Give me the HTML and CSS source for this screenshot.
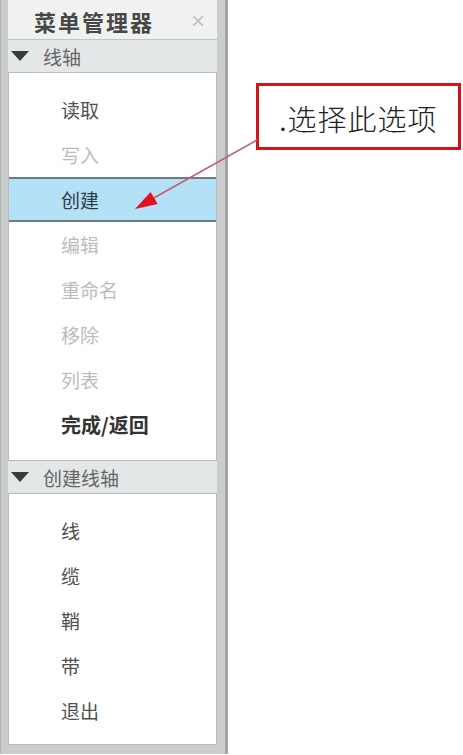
FILE: index.html
```html
<!DOCTYPE html>
<html lang="zh-CN">
<head>
    <meta charset="UTF-8">
    <meta name="viewport" content="width=device-width, initial-scale=1.0">
    <title>菜单管理器</title>
    <link rel="stylesheet" href="styles.css">
</head>
<body>
    <div class="panel">
        <div class="title-bar">
            <span class="title">菜单管理器</span>
            <span class="close">&times;</span>
        </div>

        <div class="section-head">
            <svg class="caret" width="18" height="10" viewBox="0 0 18 10"><polygon points="0,0 18,0 9,10" fill="#3a3a3a"/></svg>
            <span>线轴</span>
        </div>
        <ul class="menu-box">
            <li>读取</li>
            <li class="disabled">写入</li>
            <li class="selected">创建</li>
            <li class="disabled">编辑</li>
            <li class="disabled">重命名</li>
            <li class="disabled">移除</li>
            <li class="disabled">列表</li>
            <li class="done">完成/返回</li>
        </ul>

        <div class="section-head">
            <svg class="caret" width="18" height="10" viewBox="0 0 18 10"><polygon points="0,0 18,0 9,10" fill="#3a3a3a"/></svg>
            <span>创建线轴</span>
        </div>
        <ul class="menu-box menu-box-small">
            <li>线</li>
            <li>缆</li>
            <li>鞘</li>
            <li>带</li>
            <li>退出</li>
        </ul>
    </div>

    <!-- annotation -->
    <div class="callout">.选择此选项</div>
    <svg class="pointer" width="463" height="755" viewBox="0 0 463 755">
        <line x1="257" y1="140" x2="152" y2="199" stroke="#c95a6e" stroke-width="1.6"/>
        <polygon points="135,209 157.6,204.1 150.6,192" fill="#e2121c"/>
    </svg>
</body>
</html>
```

FILE: styles.css
```css
body {
    margin: 0;
    background-color: #fff;
    font-family: "Noto Sans CJK SC", "Liberation Sans", sans-serif;
}
.panel {
    width: 228px;
    box-sizing: border-box;
    background-color: #cbcdcd;
    padding: 0 8px 9px 7px;
    border-left: 1px solid #b5b5b5;
    border-right: 3px solid #a3a5a5;
}
.title-bar {
    height: 40px;
    display: flex;
    align-items: center;
    background-color: #f0f2f2;
    border-bottom: 1px solid #c2c4c4;
    box-sizing: border-box;
    padding-left: 26px;
    padding-top: 3px;
}
.title {
    font-size: 22px;
    font-weight: bold;
    color: #474747;
    letter-spacing: 2px;
}
.close {
    margin-left: auto;
    margin-right: 12px;
    font-family: "Liberation Sans", sans-serif;
    font-size: 24px;
    color: #c4c4c4;
}
.section-head {
    height: 32px;
    display: flex;
    align-items: center;
    gap: 14px;
    padding-left: 3px;
    background-color: #e3e7e7;
    font-size: 19px;
    color: #666;
}
.caret {
    flex: none;
}
.menu-box {
    list-style: none;
    margin: 0;
    padding: 14px 0 13px 0;
    background-color: #fff;
    border: 1px solid #b9bbbb;
}
.menu-box-small {
    padding-bottom: 11px;
}
.menu-box li {
    height: 45px;
    line-height: 45px;
    padding-left: 52px;
    font-size: 19px;
    color: #505050;
}
.menu-box li.disabled {
    color: #bcbcbc;
}
.menu-box li.selected {
    background-color: #b5e1f6;
    border-top: 2px solid #6c7c82;
    border-bottom: 2px solid #6c7c82;
    box-sizing: border-box;
    line-height: 41px;
    color: #2e3e46;
}
.menu-box li.done {
    font-weight: bold;
    color: #333;
    font-size: 20px;
}
.callout {
    position: absolute;
    left: 256px;
    top: 83px;
    width: 205px;
    height: 67px;
    box-sizing: border-box;
    border: 3px solid #d4121c;
    display: flex;
    align-items: center;
    justify-content: center;
    padding-top: 2px;
    font-family: "Liberation Serif", "Noto Sans CJK SC", serif;
    font-size: 29px;
    font-weight: 300;
    letter-spacing: 1px;
    color: #222;
}
.pointer {
    position: absolute;
    left: 0;
    top: 0;
    pointer-events: none;
}
```
